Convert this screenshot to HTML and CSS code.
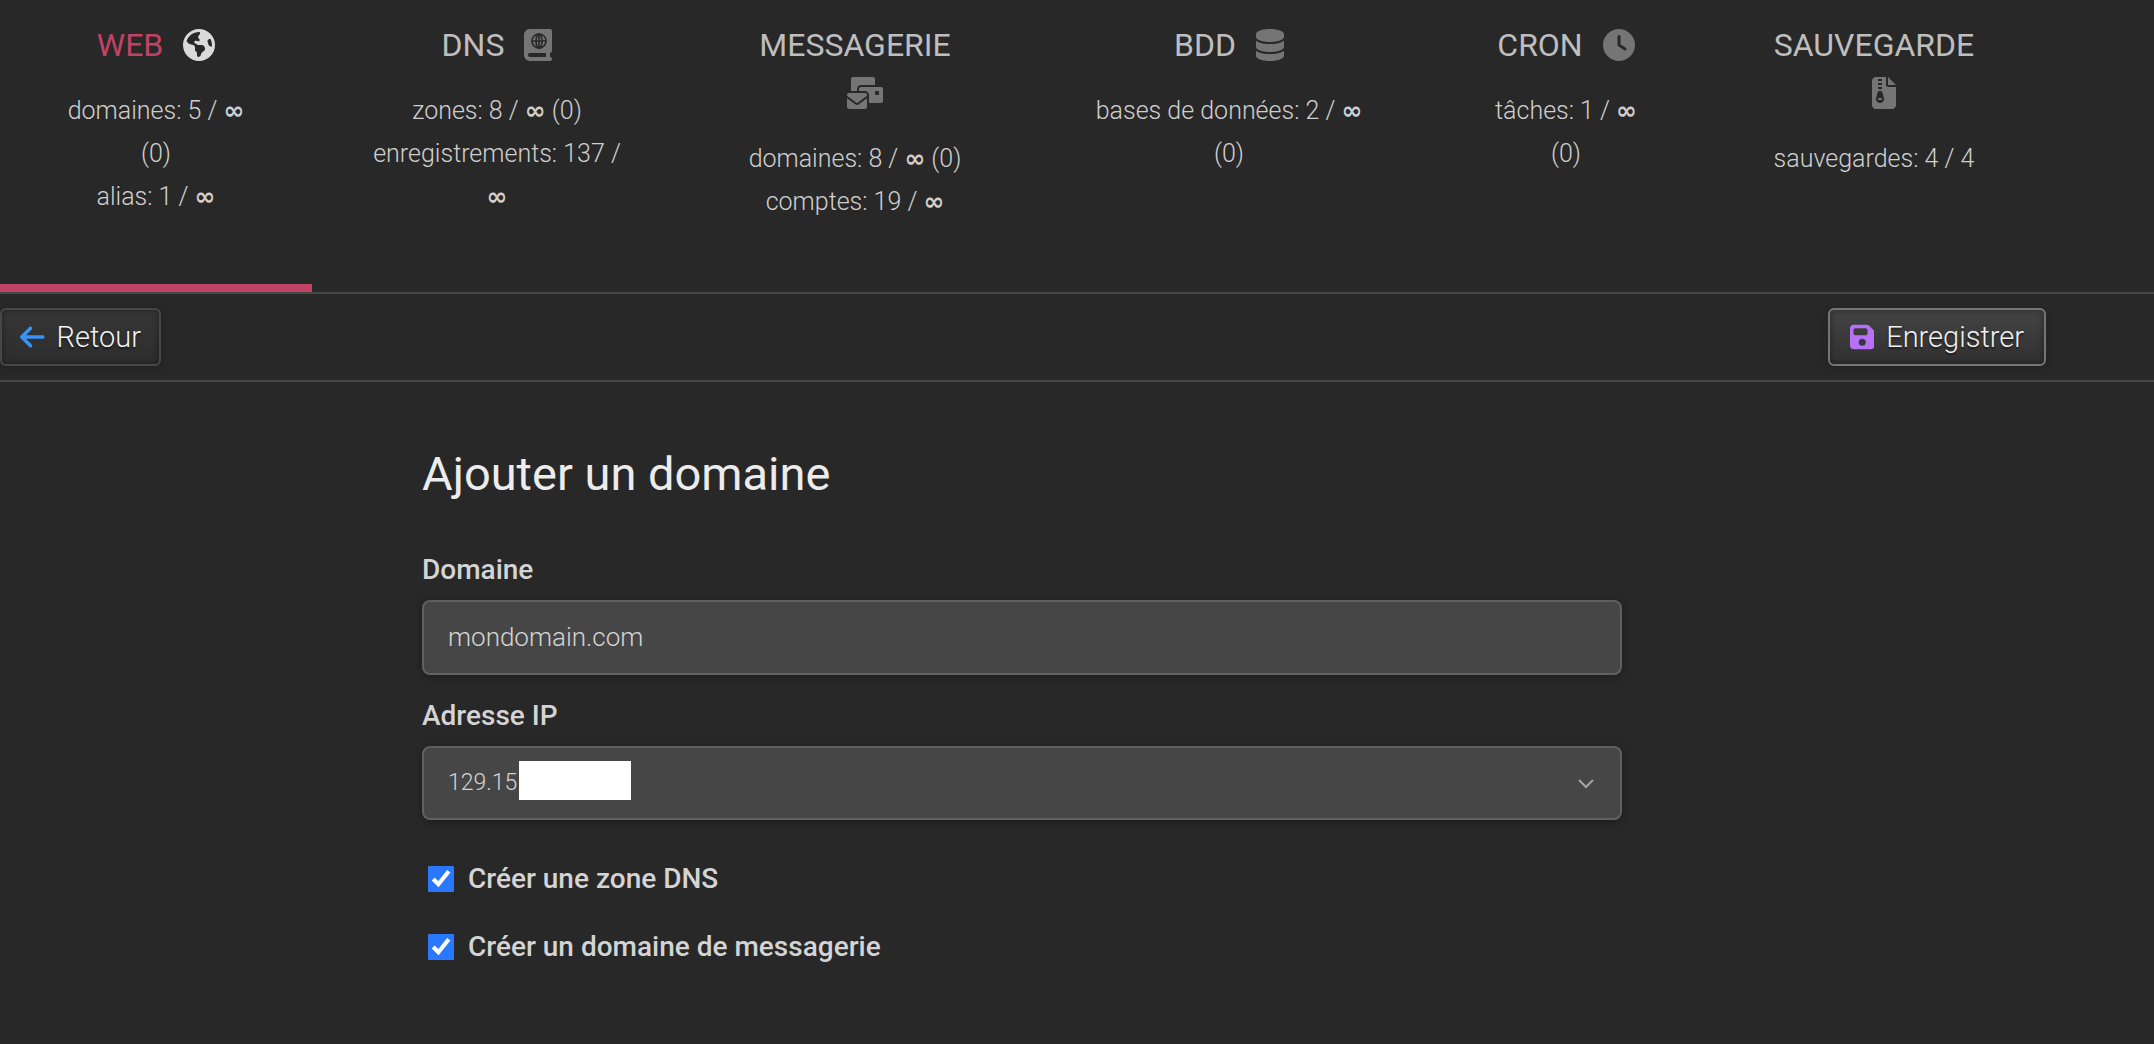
FILE: index.html
```html
<!DOCTYPE html>
<html lang="fr">
<head>
<meta charset="utf-8">
<title>Ajouter un domaine</title>
<link rel="stylesheet" href="styles.css">
</head>
<body>
<nav class="tabs">
  <a class="tab active" href="#web">
    <span class="tab-title">WEB <svg class="icon" viewBox="0 0 512 512"><path fill-rule="evenodd" d="M57.7 193l9.4 16.4c8.3 14.5 21.9 25.2 38 29.8L163 255.7c17.2 4.9 29 20.6 29 38.5v39.9c0 11 6.2 21 16 25.9s16 14.9 16 25.9v39c0 15.6 14.9 26.9 29.9 22.6c16.1-4.6 28.6-17.5 32.7-33.8l2.8-11.2c4.2-16.9 15.2-31.4 30.3-40l8.1-4.6c15-8.5 24.2-24.5 24.2-41.7v-8.3c0-12.7-5.1-24.9-14.1-33.9l-3.9-3.9c-9-9-21.2-14.1-33.9-14.1H257c-11.1 0-22.1-2.9-31.8-8.4l-34.5-19.7c-4.3-2.5-7.6-6.5-9.2-11.2c-3.2-9.6 1.1-20 10.2-24.5l5.9-3c6.6-3.3 14.3-3.9 21.3-1.5l23.2 7.7c8.2 2.7 17.2-.4 21.9-7.5c4.7-7 4.2-16.3-1.2-22.8l-13.6-16.3c-10-12-9.9-29.5 .3-41.3l15.7-18.3c8.8-10.3 10.2-25 3.5-36.7l-2.4-4.2c-3.5-.2-6.9-.3-10.4-.3C163.1 48 84.4 108.9 57.7 193zM464 256c0-36.8-9.6-71.4-26.4-101.5L412 164.8c-15.7 6.3-23.8 23.8-18.5 39.8l16.9 50.7c3.5 10.4 12 18.3 22.6 20.9l29.1 7.3c1.2-9 1.8-18.2 1.8-27.5zM0 256a256 256 0 1 1 512 0A256 256 0 1 1 0 256z"/></svg></span>
    <span class="stats">domaines: 5 / <b>∞</b><br>(0)<br>alias: 1 / <b>∞</b></span>
  </a>
  <a class="tab" href="#dns">
    <span class="tab-title">DNS <svg class="icon" viewBox="0 0 448 512"><path fill-rule="evenodd" d="M0 96C0 43 43 0 96 0H416c17.7 0 32 14.3 32 32V352c0 17.7-14.3 32-32 32v64c17.7 0 32 14.3 32 32s-14.3 32-32 32H96c-53 0-96-43-96-96V96zM64 416c0 17.7 14.3 32 32 32H352V384H96c-17.7 0-32 14.3-32 32z"/><g class="cutout"><circle cx="240" cy="192" r="113"/><ellipse cx="240" cy="192" rx="48" ry="113"/><path d="M127 192H353M240 79V305"/></g></svg></span>
    <span class="stats">zones: 8 / <b>∞</b> (0)<br>enregistrements: 137 /<br><b>∞</b></span>
  </a>
  <a class="tab stacked" href="#mail">
    <span class="tab-title">MESSAGERIE <svg class="icon" viewBox="32 0 576 512"><path fill-rule="evenodd" d="M128 0C110.3 0 96 14.3 96 32V224h96V192c0-35.3 28.7-64 64-64H480V32c0-17.7-14.3-32-32-32H128zM256 160c-17.7 0-32 14.3-32 32v32h96c35.3 0 64 28.7 64 64V416H576c17.7 0 32-14.3 32-32V192c0-17.7-14.3-32-32-32H256zm240 64h32c8.8 0 16 7.2 16 16v32c0 8.8-7.2 16-16 16H496c-8.8 0-16-7.2-16-16V240c0-8.8 7.2-16 16-16zM64 256c-17.7 0-32 14.3-32 32v13L187.1 415.9c1.4 1 3.1 1.6 4.9 1.6s3.5-.6 4.9-1.6L352 301V288c0-17.7-14.3-32-32-32H64zm288 84.8L216 441.6c-6.9 5.1-15.3 7.9-24 7.9s-17-2.8-24-7.9L32 340.8V480c0 17.7 14.3 32 32 32H320c17.7 0 32-14.3 32-32V340.8z"/></svg></span>
    <span class="stats">domaines: 8 / <b>∞</b> (0)<br>comptes: 19 / <b>∞</b></span>
  </a>
  <a class="tab" href="#db">
    <span class="tab-title">BDD <svg class="icon" viewBox="0 0 448 512"><path d="M448 80v48c0 44.2-100.3 80-224 80S0 172.2 0 128V80C0 35.8 100.3 0 224 0S448 35.8 448 80zM393.2 214.7c20.8-7.4 39.9-16.9 54.8-28.6V288c0 44.2-100.3 80-224 80S0 332.2 0 288V186.1c14.9 11.8 34 21.2 54.8 28.6C99.7 230.7 159.5 240 224 240s124.3-9.3 169.2-25.3zM0 346.1c14.9 11.8 34 21.2 54.8 28.6C99.7 390.7 159.5 400 224 400s124.3-9.3 169.2-25.3c20.8-7.4 39.9-16.9 54.8-28.6V432c0 44.2-100.3 80-224 80S0 476.2 0 432V346.1z"/></svg></span>
    <span class="stats">bases de données: 2 / <b>∞</b><br>(0)</span>
  </a>
  <a class="tab" href="#cron">
    <span class="tab-title">CRON <svg class="icon" viewBox="0 0 512 512"><path fill-rule="evenodd" d="M256 0a256 256 0 1 1 0 512A256 256 0 1 1 256 0zM232 120V256c0 8 4 15.5 10.7 20l96 64c11 7.4 25.9 4.4 33.3-6.7s4.4-25.9-6.7-33.3L280 243.2V120c0-13.3-10.7-24-24-24s-24 10.7-24 24z"/></svg></span>
    <span class="stats">tâches: 1 / <b>∞</b><br>(0)</span>
  </a>
  <a class="tab stacked" href="#backup">
    <span class="tab-title">SAUVEGARDE <svg class="icon" viewBox="0 0 384 512"><path fill-rule="evenodd" d="M64 0C28.7 0 0 28.7 0 64V448c0 35.3 28.7 64 64 64H320c35.3 0 64-28.7 64-64V160H256c-17.7 0-32-14.3-32-32V0H64zM256 0V128H384L256 0zM96 32H160V64H96zM96 96H160V128H96zM96 160H160V192H96zM89.7 247.8c3.7-14 16.4-23.8 30.9-23.8h14.8c14.5 0 27.2 9.7 30.9 23.8l23.5 88.2c1.4 5.4 2.1 10.9 2.1 16.4c0 35.2-28.8 63.7-64 63.7s-64-28.5-64-63.7c0-5.5 .7-11.1 2.1-16.4l23.5-88.2zM112 336c-8.8 0-16 7.2-16 16s7.2 16 16 16h32c8.8 0 16-7.2 16-16s-7.2-16-16-16H112z"/></svg></span>
    <span class="stats">sauvegardes: 4 / 4</span>
  </a>
</nav>
<div class="toolbar">
  <button class="btn btn-back" type="button"><svg class="btn-icon" viewBox="0 0 448 512"><path d="M9.4 233.4c-12.5 12.5-12.5 32.8 0 45.3l160 160c12.5 12.5 32.8 12.5 45.3 0s12.5-32.8 0-45.3L109.2 288 416 288c17.7 0 32-14.3 32-32s-14.3-32-32-32l-306.7 0L214.6 118.6c12.5-12.5 12.5-32.8 0-45.3s-32.8-12.5-45.3 0l-160 160z"/></svg>Retour</button>
  <button class="btn btn-save" type="submit" form="domain-form"><svg class="btn-icon" viewBox="0 0 448 512"><path fill-rule="evenodd" d="M64 32C28.7 32 0 60.7 0 96V416c0 35.3 28.7 64 64 64H384c35.3 0 64-28.7 64-64V173.3c0-17-6.7-33.3-18.7-45.3L352 50.7C340 38.7 323.7 32 306.7 32H64zm0 96c0-17.7 14.3-32 32-32H288c17.7 0 32 14.3 32 32v64c0 17.7-14.3 32-32 32H96c-17.7 0-32-14.3-32-32V128zM224 288a64 64 0 1 1 0 128 64 64 0 1 1 0-128z"/></svg>Enregistrer</button>
</div>
<main class="content">
  <form class="form" id="domain-form">
    <h1 class="form-title">Ajouter un domaine</h1>
    <label class="label" for="domain">Domaine</label>
    <input class="control" id="domain" type="text" value="mondomain.com">
    <label class="label" for="ip">Adresse IP</label>
    <div class="select-wrap">
      <select class="control select" id="ip"><option>129.15</option></select>
      <span class="mask"></span>
      <svg class="chevron" viewBox="0 0 16 10"><path d="M1 1l7 7 7-7"/></svg>
    </div>
    <div class="checks">
      <label class="check"><input class="box" type="checkbox" checked>Créer une zone DNS</label>
      <label class="check"><input class="box" type="checkbox" checked>Créer un domaine de messagerie</label>
    </div>
  </form>
</main>
</body>
</html>
```
FILE: styles.css
```css
* {
  box-sizing: border-box;
}

body {
  margin: 0;
  min-height: 100vh;
  background: #282828;
  color: #d4d4d4;
  font-family: Roboto, "Liberation Sans", sans-serif;
}

.tabs {
  display: grid;
  grid-template-columns: 312fr 370fr 346fr 402fr 272fr 344fr;
  padding-right: 108px;
  border-bottom: 2px solid #474747;
}

.tab {
  display: flex;
  flex-direction: column;
  align-items: center;
  gap: 20px;
  min-height: 292px;
  padding-top: 21px;
  border-bottom: 8px solid transparent;
  color: #bebebe;
  text-align: center;
  text-decoration: none;
  white-space: nowrap;
}

.tab.active {
  border-color: #c14266;
}

.tab-title {
  display: flex;
  align-items: center;
  gap: 20px;
  font-size: 32px;
  line-height: 48px;
}

.active .tab-title {
  color: #c14266;
}

.stacked {
  gap: 28px;
}

.stacked .tab-title {
  flex-direction: column;
  gap: 8px;
}

.icon {
  height: 32px;
  fill: #757575;
}

.stacked .icon {
  margin-left: 20px;
}

.active .icon {
  fill: #dadada;
}

.cutout {
  fill: none;
  stroke: #282828;
  stroke-width: 26px;
}

.stats {
  color: #cfcfcf;
  font-size: 25px;
  font-weight: 300;
  line-height: 43px;
}

.stats b {
  font-family: "DejaVu Sans", sans-serif;
  font-weight: 700;
  line-height: 1;
}

.toolbar {
  display: flex;
  justify-content: space-between;
  padding: 14px 108px 14px 0;
  border-bottom: 2px solid #474747;
}

.btn {
  display: flex;
  align-items: center;
  gap: 12px;
  height: 58px;
  padding: 0 20px;
  border: 2px solid #474747;
  border-radius: 6px;
  background: linear-gradient(#363636, #2d2d2d);
  box-shadow: 0 2px 8px rgba(0, 0, 0, 0.2), inset 0 0 6px rgba(0, 0, 0, 0.4);
  color: #f0f0f0;
  font-family: inherit;
  font-size: 29px;
  font-weight: 300;
  text-shadow: 0 2px 2px rgba(0, 0, 0, 0.5);
}

.btn-back {
  padding: 0 18px;
}

.btn-save {
  border-color: #757575;
  background: linear-gradient(#444444, #303030);
}

.btn-icon {
  height: 28px;
  fill: #b771f7;
}

.btn-back .btn-icon {
  fill: #3794f4;
}

.content {
  padding: 60px 110px 60px 0;
}

.form {
  display: flex;
  flex-direction: column;
  width: 1200px;
  max-width: 100%;
  margin: 0 auto;
}

.form-title {
  margin: 0 0 42px;
  color: #ececec;
  font-size: 47px;
  font-weight: 400;
  line-height: 64px;
}

.label {
  margin-bottom: 8px;
  font-size: 28px;
  font-weight: 500;
  line-height: 44px;
}

.control {
  width: 100%;
  height: 75px;
  margin-bottom: 19px;
  padding: 0 24px 2px;
  appearance: none;
  border: 2px solid #606060;
  border-radius: 8px;
  outline: 0;
  background: #464646;
  box-shadow: 0 2px 8px rgba(0, 0, 0, 0.3);
  color: #d4d4d4;
  font-family: inherit;
  font-size: 26px;
  font-weight: 300;
}

.select {
  height: 74px;
  font-size: 23px;
}

.select-wrap {
  position: relative;
}

.mask {
  position: absolute;
  top: 15px;
  left: 97px;
  width: 112px;
  height: 39px;
  background: #ffffff;
}

.chevron {
  position: absolute;
  top: 33px;
  right: 28px;
  width: 16px;
  fill: none;
  stroke: #a5a5a5;
  stroke-width: 2px;
}

.checks {
  display: flex;
  flex-direction: column;
  gap: 24px;
  padding: 18px 6px;
}

.check {
  display: flex;
  align-items: center;
  gap: 14px;
  font-size: 28px;
  font-weight: 500;
  line-height: 44px;
}

.box {
  width: 26px;
  height: 26px;
  margin: 0;
  accent-color: #2879ff;
}
```
